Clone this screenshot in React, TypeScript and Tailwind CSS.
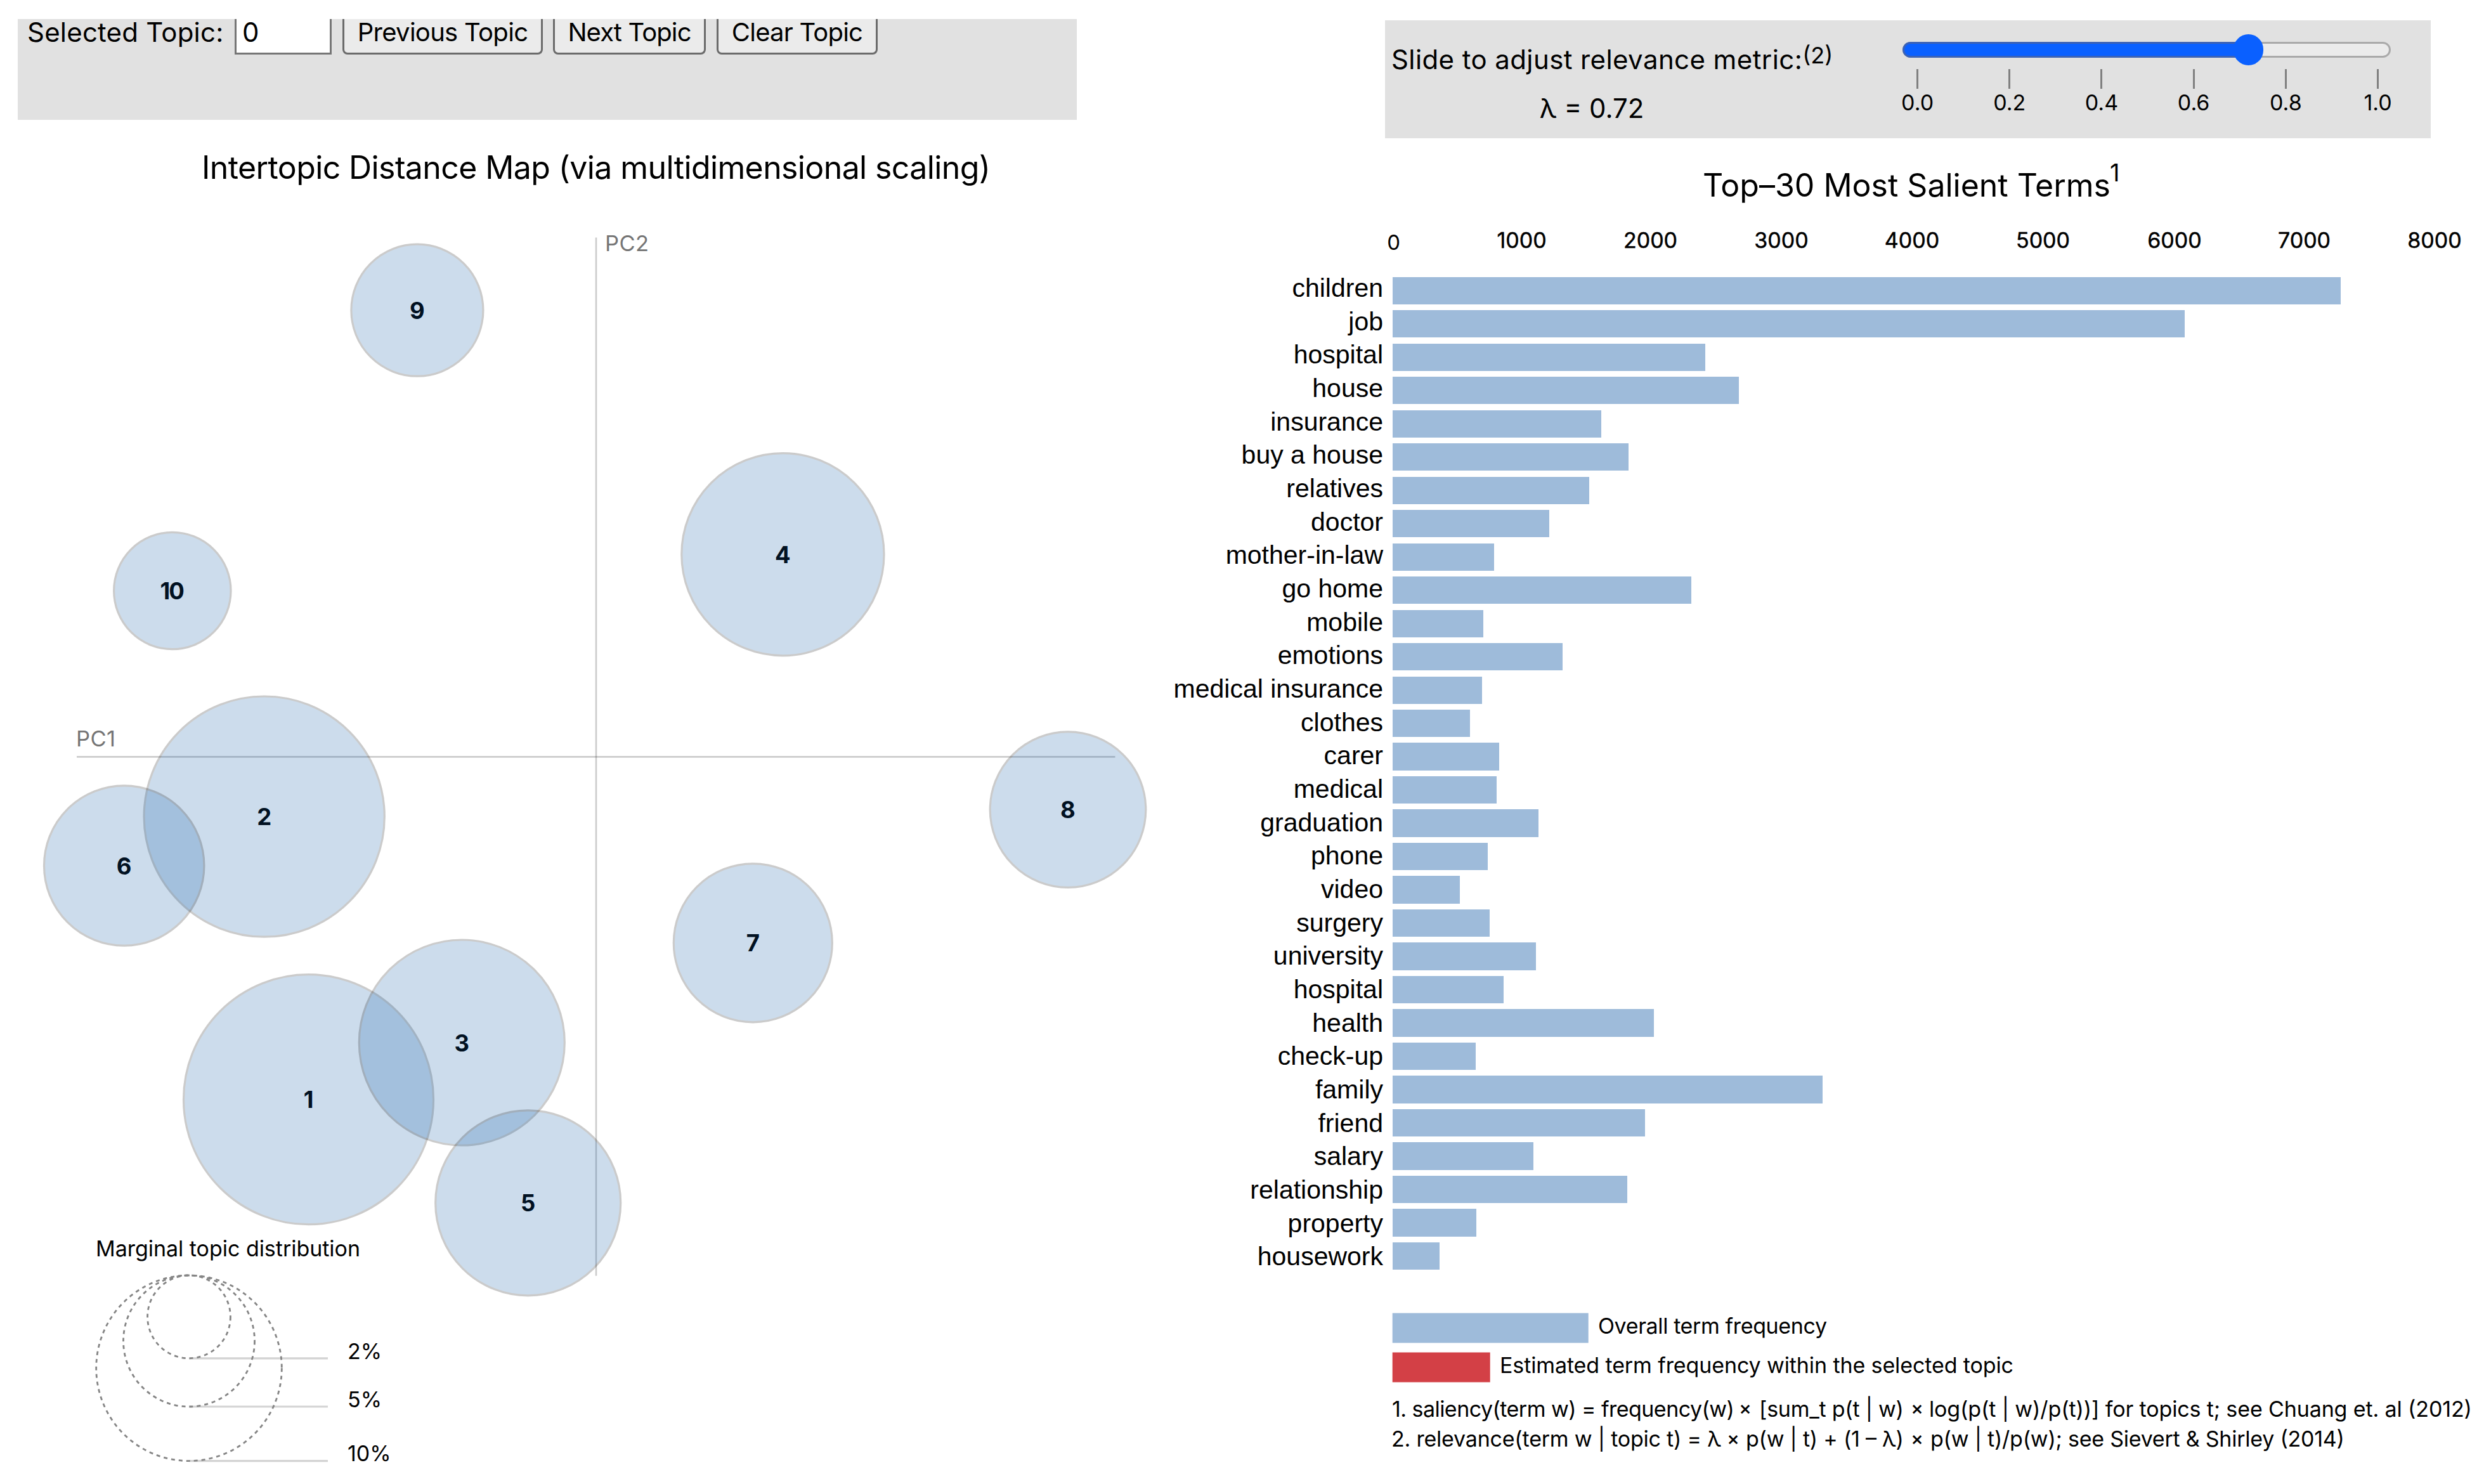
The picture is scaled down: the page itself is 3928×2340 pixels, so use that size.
const topics = [
  { id: 1, x: 486.5, y: 1733.7, r: 197 },
  { id: 2, x: 416.7, y: 1287.6, r: 189.6 },
  { id: 3, x: 728.3, y: 1644, r: 162 },
  { id: 4, x: 1234.4, y: 874.2, r: 159.6 },
  { id: 5, x: 832.7, y: 1896.8, r: 146 },
  { id: 6, x: 195.7, y: 1365, r: 126.2 },
  { id: 7, x: 1187.3, y: 1486.8, r: 125 },
  { id: 8, x: 1684, y: 1276.6, r: 122.8 },
  { id: 9, x: 657.9, y: 489.2, r: 104 },
  { id: 10, x: 271.8, y: 931.5, r: 92.2 },
];

// width is the overall term frequency, in chart pixels
const terms = [
  { name: 'children', width: 1495.4 },
  { name: 'job', width: 1249 },
  { name: 'hospital', width: 493.2 },
  { name: 'house', width: 546.1 },
  { name: 'insurance', width: 329 },
  { name: 'buy a house', width: 372.5 },
  { name: 'relatives', width: 310 },
  { name: 'doctor', width: 247.6 },
  { name: 'mother-in-law', width: 160 },
  { name: 'go home', width: 471 },
  { name: 'mobile', width: 143.5 },
  { name: 'emotions', width: 268.7 },
  { name: 'medical insurance', width: 141.4 },
  { name: 'clothes', width: 122 },
  { name: 'carer', width: 168.7 },
  { name: 'medical', width: 164.2 },
  { name: 'graduation', width: 230 },
  { name: 'phone', width: 150 },
  { name: 'video', width: 106.6 },
  { name: 'surgery', width: 153.6 },
  { name: 'university', width: 226.2 },
  { name: 'hospital', width: 175.4 },
  { name: 'health', width: 412.5 },
  { name: 'check-up', width: 131.5 },
  { name: 'family', width: 678 },
  { name: 'friend', width: 398.5 },
  { name: 'salary', width: 222.4 },
  { name: 'relationship', width: 370.7 },
  { name: 'property', width: 132.2 },
  { name: 'housework', width: 74.4 },
];

const axisLabels = [
  { value: '1000', x: 2399.5 },
  { value: '2000', x: 2602.5 },
  { value: '3000', x: 2809 },
  { value: '4000', x: 3015 },
  { value: '5000', x: 3221.5 },
  { value: '6000', x: 3429 },
  { value: '7000', x: 3633.5 },
  { value: '8000', x: 3839 },
];

const sizes = [
  { label: '2%', r: 65.4, y: 2143.3 },
  { label: '5%', r: 103.5, y: 2219 },
  { label: '10%', r: 146.3, y: 2303.7 },
];

const sliderTicks = ['0.0', '0.2', '0.4', '0.6', '0.8', '1.0'];

const TopicControls = () => (
  <div className="ml-7 mt-[30px] h-[159px] w-[1670px] bg-[#e1e1e1] pl-[15px] text-[42px]">
    <div className="flex h-[56px] items-stretch leading-[42px]">
      <label className="w-[327px] whitespace-nowrap tracking-[0.2px]">Selected Topic:</label>
      <div className="mr-[17px] w-[153px] border-[3px] border-t-0 border-[#767676] bg-white pl-[9px]">0</div>
      <button className="mr-4 w-[316px] whitespace-nowrap rounded-b-lg border-[3px] border-t-0 border-[#6b6b6b] bg-[#ebebeb] pb-[11px] text-[40px] leading-[42px] tracking-[-0.7px]">
        Previous Topic
      </button>
      <button className="mr-[17px] w-[241px] whitespace-nowrap rounded-b-lg border-[3px] border-t-0 border-[#6b6b6b] bg-[#ebebeb] pb-[11px] text-[40px] leading-[42px] tracking-[-0.9px]">
        Next Topic
      </button>
      <button className="w-[254px] whitespace-nowrap rounded-b-lg border-[3px] border-t-0 border-[#6b6b6b] bg-[#ebebeb] pb-[11px] text-[40px] leading-[42px] tracking-[-0.8px]">
        Clear Topic
      </button>
    </div>
  </div>
);

const TopicMap = () => (
  <svg className="block" width="1840" height="2151" viewBox="0 189 1840 2151">
    <text x="940" y="282" fontSize="50" textAnchor="middle" textLength="1244">
      Intertopic Distance Map (via multidimensional scaling)
    </text>

    <g stroke="#000" strokeOpacity="0.2" strokeWidth="2.6">
      <line x1="121" x2="1758.5" y1="1193.4" y2="1193.4" />
      <line x1="940" x2="940" y1="374.4" y2="2011.8" />
    </g>
    <g fill="#757575" fontSize="34.5">
      <text x="120" y="1177.4" textLength="62">PC1</text>
      <text x="954" y="396.4" textLength="69">PC2</text>
    </g>

    {topics.map((topic) => (
      <text
        key={topic.id}
        x={topic.id === 10 ? topic.x - 1 : topic.x}
        y={topic.y + 13.5}
        fontSize="36.5"
        fontWeight="700"
        textAnchor="middle"
        letterSpacing={topic.id === 10 ? -2 : 0}
      >
        {topic.id}
      </text>
    ))}
    {topics.map((topic) => (
      <circle
        key={topic.id}
        cx={topic.x}
        cy={topic.y}
        r={topic.r}
        fill="#0555a5"
        stroke="#000"
        strokeWidth="3.2"
        opacity="0.2"
      />
    ))}

    <text x="151" y="1980.7" fontSize="34" textLength="417">Marginal topic distribution</text>
    {sizes.map((size) => (
      <g key={size.label}>
        <line
          x1="298"
          x2="517"
          y1={2011 + size.r * 2}
          y2={2011 + size.r * 2}
          stroke="#808080"
          strokeOpacity="0.35"
          strokeWidth="3.2"
        />
        <circle
          cx="298"
          cy={2011 + size.r}
          r={size.r}
          fill="none"
          stroke="#858585"
          strokeWidth="2.8"
          strokeDasharray="6 6"
        />
        <text x="548" y={size.y} fontSize="34">{size.label}</text>
      </g>
    ))}
  </svg>
);

const RelevanceSlider = () => (
  <div className="ml-[344px] mt-8 flex h-[186px] w-[1649px] bg-[#e1e1e1]">
    <div className="w-[816px] pl-[10px] text-[42px]">
      <div className="mt-[34px] flex h-[56px] whitespace-nowrap leading-[56px]">
        <span className="tracking-[0.4px]">Slide to adjust relevance metric:</span>
        <span className="-mt-[7px] text-[36px]">(2)</span>
      </div>
      <div className="mt-[21px] w-[632px] text-center leading-[56px]">λ = 0.72</div>
    </div>
    <div className="w-[770px]">
      <div className="relative mt-[34px] h-[25px] rounded-full border-[3px] border-[#aaaaaa] bg-[#ebebeb]">
        <div className="absolute -left-[3px] -top-[3px] h-[25px] w-[546px] rounded-l-full border-[3px] border-[#3b62b6] bg-[#0a60ff]" />
        <div className="absolute -top-[15px] left-[519px] h-[49px] w-[47px] rounded-full bg-[#0a60ff]" />
      </div>
      <div className="-ml-[49px] mt-[18px] flex w-[872px]">
        {sliderTicks.map((tick) => (
          <div key={tick} className="flex w-[145.2px] flex-col items-center">
            <div className="h-[31px] w-[3px] bg-[#808080]" />
            <span className="mt-[2px] text-[34px] leading-[40px]">{tick}</span>
          </div>
        ))}
      </div>
    </div>
  </div>
);

const TermsChart = () => (
  <>
    <svg className="block" width="2088" height="218" viewBox="1840 218 2088 218">
      <text x="2685" y="310.3" fontSize="50" textLength="643">Top–30 Most Salient Terms</text>
      <text x="3327" y="285.7" fontSize="38">1</text>
      <text x="2197.6" y="393.5" fontSize="33" textAnchor="middle">0</text>
      {axisLabels.map((label) => (
        <text
          key={label.value}
          x={label.x}
          y="390.8"
          fontSize="34"
          stroke="#000"
          strokeWidth="0.5"
          textAnchor="middle"
        >
          {label.value}
        </text>
      ))}
    </svg>
    <div className="flex">
      <div className="w-[342px] pr-px pt-px text-right font-['Liberation_Sans',Arial,sans-serif] text-[41px]">
        {terms.map((term, i) => (
          <div key={i} className="h-[52.68px] whitespace-nowrap leading-[34px]">{term.name}</div>
        ))}
      </div>
      <div className="ml-[13.6px] pt-[0.7px]">
        {terms.map((term, i) => (
          <div key={i} className="mb-[9.2px] h-[43.3px] bg-[#9ebbda]" style={{ width: term.width }} />
        ))}
      </div>
    </div>
  </>
);

const ChartLegend = () => (
  <svg className="block" width="2088" height="320" viewBox="1840 2020 2088 320">
    <rect x="2195.7" y="2070.5" width="309" height="47" fill="#9ebbda" />
    <rect x="2195.7" y="2132.5" width="154" height="47" fill="#d34046" />
    <g fontSize="34">
      <text x="2520" y="2103" textLength="361">Overall term frequency</text>
      <text x="2365" y="2165.3" textLength="810">Estimated term frequency within the selected topic</text>

      <text x="2195" y="2234.3" textLength="540">1. saliency(term w) = frequency(w)</text>
      <text x="2774" y="2234.3" textLength="228">[sum_t p(t | w)</text>
      <text x="3042" y="2234.3" textLength="856">
        log(p(t | w)/p(t))] for topics t; see Chuang et. al (2012)
      </text>

      <text x="2194" y="2280.7" textLength="520">2. relevance(term w | topic t) = λ</text>
      <text x="2753" y="2280.7" textLength="249">p(w | t) + (1 – λ)</text>
      <text x="3044" y="2280.7" textLength="653">p(w | t)/p(w); see Sievert &amp; Shirley (2014)</text>
    </g>
    <g fontSize="30" fontWeight="500" textAnchor="middle">
      <text x="2752" y="2231">×</text>
      <text x="3023" y="2231">×</text>
      <text x="2733" y="2279">×</text>
      <text x="3023" y="2279">×</text>
    </g>
  </svg>
);

const App = () => {
  return (
    <main className="flex h-[2340px] w-[3928px] overflow-hidden bg-white font-['Inter','Liberation_Sans',sans-serif] text-black">
      <section className="w-[1840px] shrink-0">
        <TopicControls />
        <TopicMap />
      </section>
      <section className="flex w-[2088px] shrink-0 flex-col">
        <RelevanceSlider />
        <TermsChart />
        <div className="mt-auto">
          <ChartLegend />
        </div>
      </section>
    </main>
  );
};

export default App;
